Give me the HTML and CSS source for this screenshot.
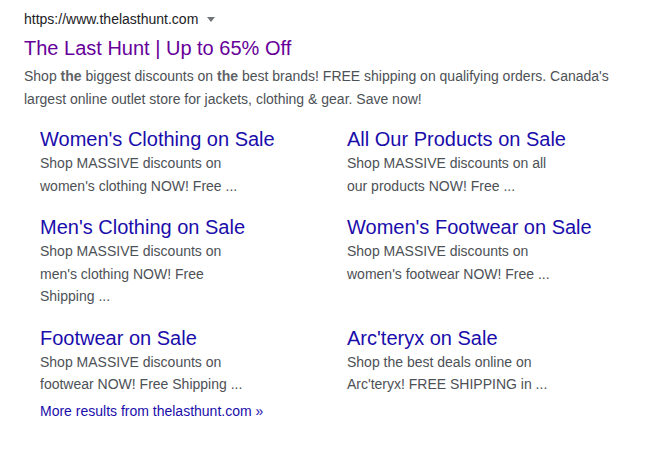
FILE: index.html
```html
<!DOCTYPE html>
<html>
<head>
<meta charset="utf-8">
<link rel="stylesheet" href="styles.css">
</head>
<body>
<div class="result">
  <div class="url-row">
    <cite class="url">https://www.thelasthunt.com</cite>
    <span class="caret"></span>
  </div>
  <a class="title" href="#">The Last Hunt | Up to 65% Off</a>
  <div class="desc">Shop <b>the</b> biggest discounts on <b>the</b> best brands! FREE shipping on qualifying orders. Canada's largest online outlet store for jackets, clothing &amp; gear. Save now!</div>
  <div class="sitelinks">
    <div class="sl">
      <a class="sl-title" href="#">Women's Clothing on Sale</a>
      <div class="sl-desc">Shop MASSIVE discounts on women's clothing NOW! Free ...</div>
    </div>
    <div class="sl">
      <a class="sl-title" href="#">All Our Products on Sale</a>
      <div class="sl-desc">Shop MASSIVE discounts on all our products NOW! Free ...</div>
    </div>
    <div class="sl">
      <a class="sl-title" href="#">Men's Clothing on Sale</a>
      <div class="sl-desc">Shop MASSIVE discounts on men's clothing NOW! Free Shipping ...</div>
    </div>
    <div class="sl">
      <a class="sl-title" href="#">Women's Footwear on Sale</a>
      <div class="sl-desc">Shop MASSIVE discounts on women's footwear NOW! Free ...</div>
    </div>
    <div class="sl">
      <a class="sl-title" href="#">Footwear on Sale</a>
      <div class="sl-desc">Shop MASSIVE discounts on footwear NOW! Free Shipping ...</div>
    </div>
    <div class="sl">
      <a class="sl-title" href="#">Arc'teryx on Sale</a>
      <div class="sl-desc">Shop the best deals online on Arc'teryx! FREE SHIPPING in ...</div>
    </div>
  </div>
  <a class="more" href="#">More results from thelasthunt.com »</a>
</div>
</body>
</html>
```

FILE: styles.css
```css
html, body {
  margin: 0;
  padding: 0;
  background: #fff;
}
body {
  font-family: Arial, "Liberation Sans", sans-serif;
}
.result {
  padding: 8px 0 0 24px;
  width: 620px;
}
.url-row {
  display: flex;
  align-items: center;
  height: 22px;
}
.url {
  font-style: normal;
  font-size: 14px;
  color: #202124;
  line-height: 22px;
}
.caret {
  width: 0;
  height: 0;
  margin-left: 9px;
  margin-top: 1px;
  border-left: 4px solid transparent;
  border-right: 4px solid transparent;
  border-top: 5px solid #70757a;
}
.title {
  display: block;
  font-size: 20px;
  line-height: 26px;
  color: #660099;
  text-decoration: none;
  margin-top: 5px;
}
.desc {
  font-size: 14px;
  line-height: 23px;
  color: #4d5156;
  margin-top: 4px;
}
.desc b {
  font-weight: bold;
  color: #5f6368;
}
.sitelinks {
  display: grid;
  grid-template-columns: 307px 307px;
  padding-left: 16px;
  margin-top: 15px;
  row-gap: 17px;
}
.sl-title {
  display: block;
  font-size: 20px;
  line-height: 26px;
  color: #1a0dab;
  text-decoration: none;
}
.sl-desc {
  width: 220px;
  font-size: 14px;
  line-height: 22.5px;
  color: #4d5156;
}
.more {
  display: block;
  margin-left: 16px;
  margin-top: 4px;
  font-size: 14px;
  line-height: 22px;
  color: #1a0dab;
  text-decoration: none;
}
```
